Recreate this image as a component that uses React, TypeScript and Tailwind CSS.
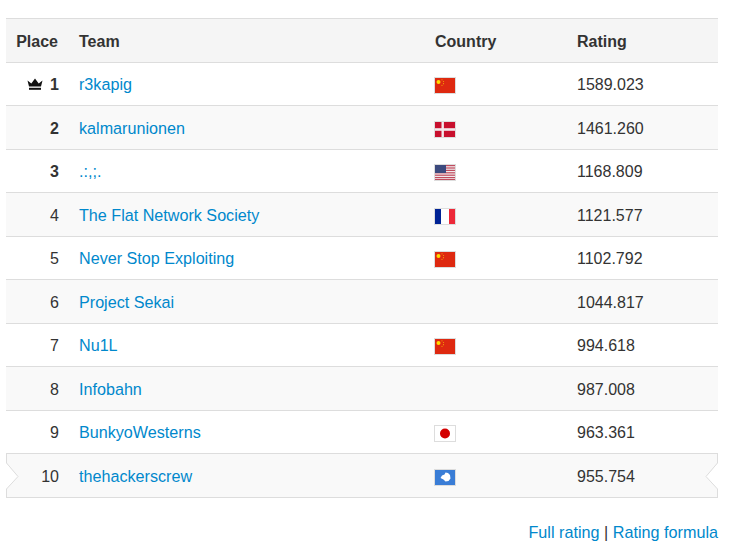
import React from 'react';

type Row = { place: number; team: string; flag?: React.ReactNode; rating: string };

const Flag: React.FC<{ children: React.ReactNode }> = ({ children }) => (
  <svg width="22" height="17" viewBox="0 0 22 17" className="-ml-px block translate-y-[2px]">
    {children}
    <rect x="0.5" y="0.5" width="21" height="16" fill="none" stroke="#dddddd" />
  </svg>
);

const China = () => (
  <Flag>
    <rect width="22" height="17" fill="#de2910" />
    <circle cx="4.5" cy="5" r="2" fill="#ffde00" />
    <circle cx="8" cy="2.8" r="0.6" fill="#f2a008" />
    <circle cx="9.5" cy="4.5" r="0.6" fill="#f2a008" />
    <circle cx="9.5" cy="6.7" r="0.6" fill="#f2a008" />
    <circle cx="8" cy="8.3" r="0.6" fill="#f2a008" />
  </Flag>
);

const Denmark = () => (
  <Flag>
    <rect width="22" height="17" fill="#c8102e" />
    <rect x="7.5" width="2.4" height="17" fill="#f3e9ec" />
    <rect y="7.2" width="22" height="2.6" fill="#f3e9ec" />
  </Flag>
);

const Usa = () => (
  <Flag>
    <rect width="22" height="17" fill="#f1e9ec" />
    {[1, 3.4, 5.8, 8.2, 10.6, 13, 15].map((y) => (
      <rect key={y} y={y} width="22" height="1.2" fill="#c04c5e" />
    ))}
    <rect width="12" height="9" fill="#3c4a7e" />
  </Flag>
);

const France = () => (
  <Flag>
    <rect width="7" height="17" fill="#002395" />
    <rect x="7" width="8" height="17" fill="#ffffff" />
    <rect x="15" width="7" height="17" fill="#ed2939" />
  </Flag>
);

const Japan = () => (
  <Flag>
    <rect width="22" height="17" fill="#ffffff" />
    <circle cx="11" cy="8.5" r="5" fill="#d30000" />
  </Flag>
);

const Antarctica = () => (
  <Flag>
    <rect width="22" height="17" fill="#3a7dd6" />
    <path d="M6.5 9 L8 6.5 L10.5 5.5 L11.5 3.5 L14 4 L16 6 L16.5 9.5 L14.5 12 L11.5 12.5 L9.5 10.5 Z" fill="#ffffff" />
  </Flag>
);

const rows: Row[] = [
  { place: 1, team: 'r3kapig', flag: <China />, rating: '1589.023' },
  { place: 2, team: 'kalmarunionen', flag: <Denmark />, rating: '1461.260' },
  { place: 3, team: '.:,;.', flag: <Usa />, rating: '1168.809' },
  { place: 4, team: 'The Flat Network Society', flag: <France />, rating: '1121.577' },
  { place: 5, team: 'Never Stop Exploiting', flag: <China />, rating: '1102.792' },
  { place: 6, team: 'Project Sekai', rating: '1044.817' },
  { place: 7, team: 'Nu1L', flag: <China />, rating: '994.618' },
  { place: 8, team: 'Infobahn', rating: '987.008' },
  { place: 9, team: 'BunkyoWesterns', flag: <Japan />, rating: '963.361' },
  { place: 10, team: 'thehackerscrew', flag: <Antarctica />, rating: '955.754' },
];

const Crown = () => (
  <svg width="16" height="13" viewBox="0 0 16 13" className="mr-[7px] inline-block align-[-1px]">
    <path d="M0.5 2.5 L4.3 5.5 L8 0.5 L11.7 5.5 L15.5 2.5 L14 8.5 H2 Z" fill="#111111" />
    <rect x="2" y="9.8" width="12" height="2" fill="#111111" />
  </svg>
);

// the white notches cut into both ends of the last row
const Notch: React.FC<{ side: 'left' | 'right' }> = ({ side }) => (
  <svg
    width="13"
    height="44"
    viewBox="0 0 13 44"
    className={side === 'left' ? 'absolute top-0 left-0' : 'absolute top-0 right-0 -scale-x-100'}
  >
    <path d="M0 9 L12 22.5 L0 35 Z" fill="#ffffff" />
    <path d="M0.5 0 V9 L12 22.5 L0.5 35 V44" fill="none" stroke="#dddddd" />
  </svg>
);

export default function App() {
  return (
    <div className="min-h-[551px] bg-white pt-[18px] pr-[29px] pl-[6px] font-['Liberation_Sans',Arial,sans-serif] text-base text-[#333333]">
      <table className="w-full table-fixed border-collapse">
        <colgroup>
          <col className="w-[63px]" />
          <col className="w-[356px]" />
          <col className="w-[142px]" />
          <col />
        </colgroup>
        <thead>
          <tr className="h-[43.6px] border-y border-[#dddddd] bg-[#f5f5f5] font-bold">
            <th className="pt-[3px] pr-[11px] pl-2.5 text-right">Place</th>
            <th className="px-2.5 pt-[3px] text-left">Team</th>
            <th className="px-2.5 pt-[3px] text-left">Country</th>
            <th className="px-2.5 pt-[3px] text-left">Rating</th>
          </tr>
        </thead>
        <tbody>
          {rows.map((row, i) => (
            <tr
              key={row.place}
              className={`h-[43.5px] border-b border-[#dddddd] ${i % 2 === 1 ? 'bg-[#f9f9f9]' : 'bg-white'}`}
            >
              <td className={`px-2.5 pt-[3px] text-right ${row.place <= 3 ? 'font-bold' : ''}`}>
                {row.place === 1 && <Crown />}
                {row.place}
              </td>
              <td className="px-2.5 pt-0.5">
                <a href="#" className="text-[16.15px] text-[#0088cc]">
                  {row.team}
                </a>
              </td>
              <td className="px-2.5">{row.flag}</td>
              <td className="px-2.5 pt-[3px]">{row.rating}</td>
            </tr>
          ))}
        </tbody>
      </table>
      <div className="relative -mt-[44px] h-[44px]">
        <Notch side="left" />
        <Notch side="right" />
      </div>
      <div className="mt-[22px] text-right text-[16.2px] text-[#333333]">
        <a href="#" className="text-[#0088cc]">
          Full rating
        </a>{' '}
        |{' '}
        <a href="#" className="text-[#0088cc]">
          Rating formula
        </a>
      </div>
    </div>
  );
}
